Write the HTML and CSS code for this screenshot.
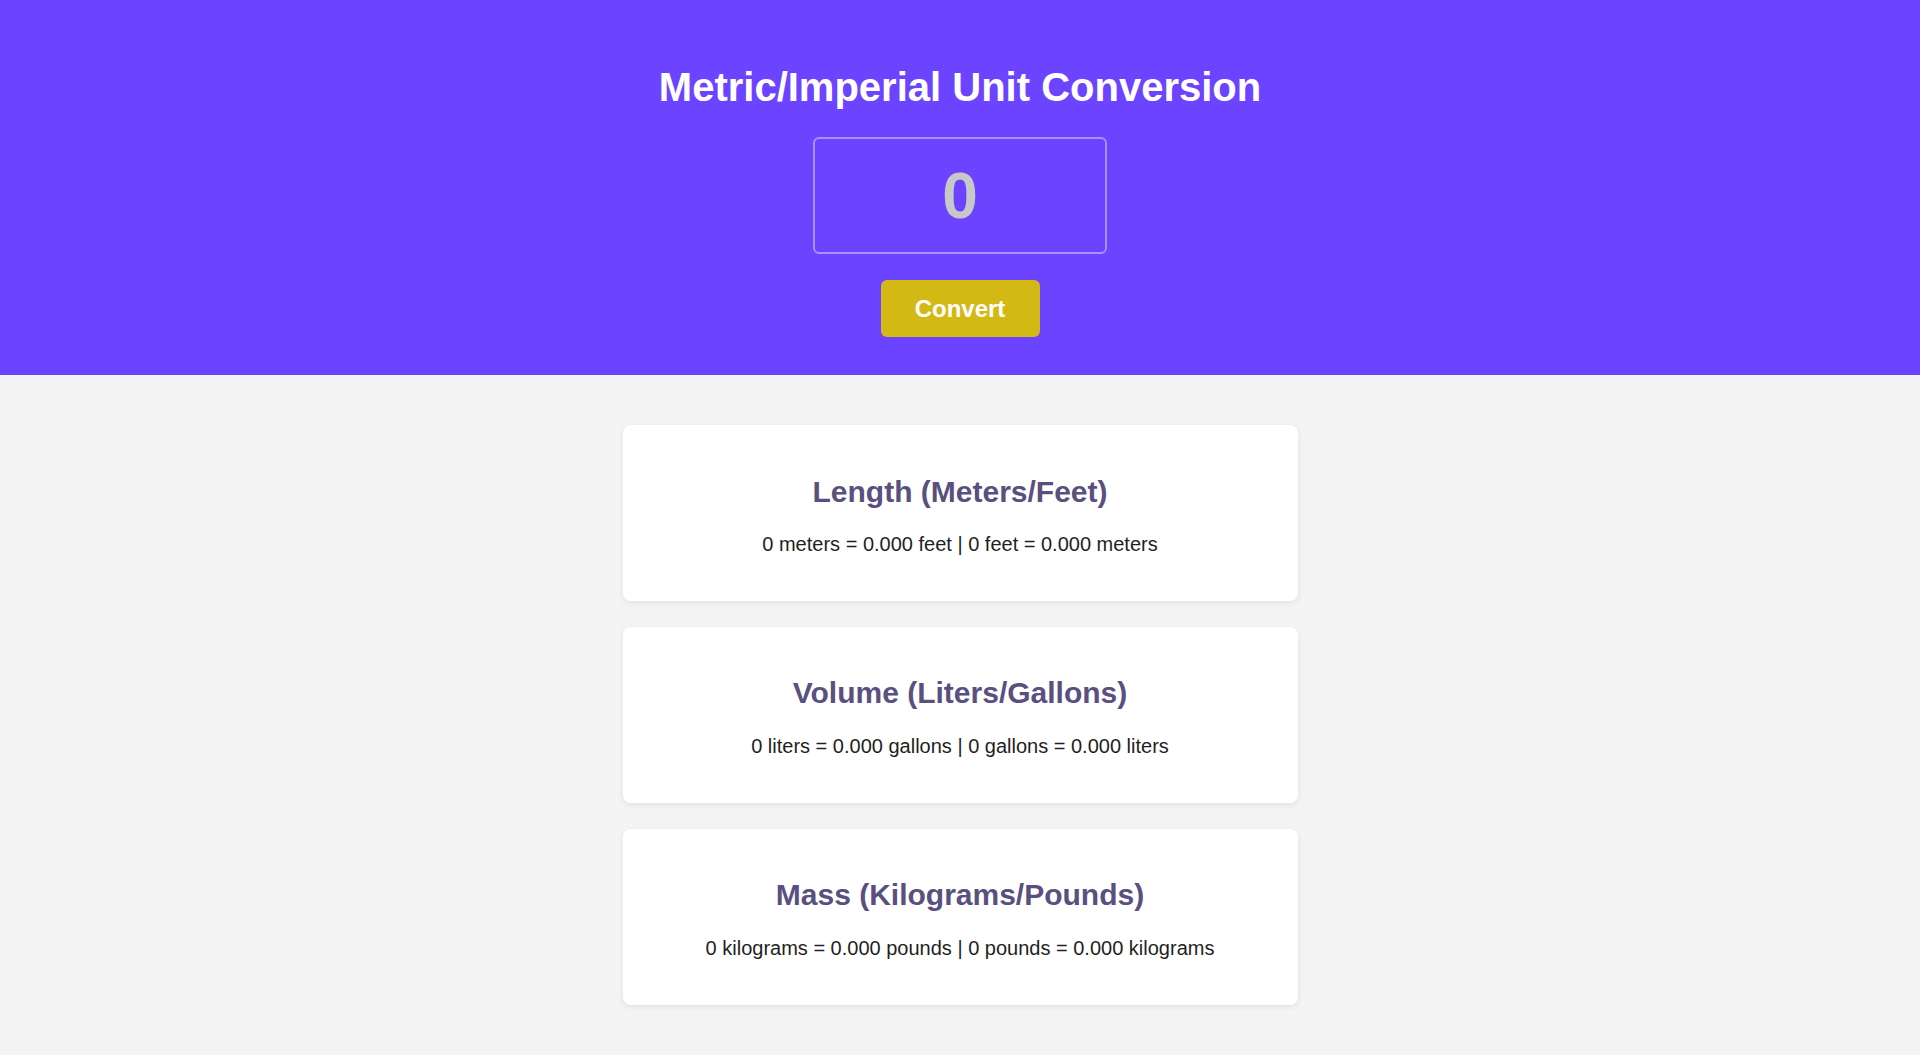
FILE: index.html
```html
<!DOCTYPE html>
<html lang="en">
<head>
<meta charset="utf-8">
<title>Metric/Imperial Unit Conversion</title>
<link rel="stylesheet" href="styles.css">
</head>
<body>
<header class="hero">
  <h1 class="hero-title">Metric/Imperial Unit Conversion</h1>
  <input class="hero-input" type="text" placeholder="0">
  <button class="hero-btn" type="button">Convert</button>
</header>
<main class="results">
  <section class="card">
    <h2 class="card-title">Length (Meters/Feet)</h2>
    <p class="card-text">0 meters = 0.000 feet | 0 feet = 0.000 meters</p>
  </section>
  <section class="card">
    <h2 class="card-title">Volume (Liters/Gallons)</h2>
    <p class="card-text">0 liters = 0.000 gallons | 0 gallons = 0.000 liters</p>
  </section>
  <section class="card">
    <h2 class="card-title">Mass (Kilograms/Pounds)</h2>
    <p class="card-text">0 kilograms = 0.000 pounds | 0 pounds = 0.000 kilograms</p>
  </section>
</main>
</body>
</html>
```

FILE: styles.css
```css
* {
  box-sizing: border-box;
}

html, body {
  margin: 0;
  padding: 0;
}

body {
  font-family: "Liberation Sans", Arial, sans-serif;
  font-size: 20px;
  background: #f4f4f4;
  color: #1f1f1f;
}

.hero {
  background: #6c43ff;
  display: flex;
  flex-direction: column;
  align-items: center;
  padding: 64px 0 38px;
}

.hero-title {
  margin: 0 0 27px;
  font-size: 40px;
  font-weight: 700;
  line-height: 46px;
  color: #ffffff;
}

.hero-input {
  width: 294px;
  height: 117px;
  border: 2px solid #a990ff;
  border-radius: 6px;
  background: transparent;
  text-align: center;
  font-family: "Liberation Sans", Arial, sans-serif;
  font-size: 64px;
  font-weight: 700;
  color: #c8c8c8;
  outline: none;
  margin: 0 0 26px;
}

.hero-input::placeholder {
  color: #c8c8c8;
  opacity: 1;
}

.hero-btn {
  width: 159px;
  height: 57px;
  border: none;
  border-radius: 6px;
  background: #d4b915;
  color: #ffffff;
  font-family: "Liberation Sans", Arial, sans-serif;
  font-size: 24px;
  font-weight: 700;
  padding: 0;
  cursor: pointer;
}

.results {
  display: flex;
  flex-direction: column;
  align-items: center;
  gap: 25.5px;
  padding: 50px 0 40px;
}

.card {
  width: 675px;
  background: #ffffff;
  border-radius: 8px;
  box-shadow: 0 2px 6px rgba(0, 0, 0, 0.08);
  text-align: center;
  padding: 49.5px 20px 45.3px;
}

.card-title {
  margin: 0 0 24px;
  font-size: 30px;
  font-weight: 700;
  line-height: 34.5px;
  color: #5a5080;
}

.card-text {
  margin: 0;
  font-size: 20px;
  line-height: 23px;
  color: #1f1f1f;
}
```
